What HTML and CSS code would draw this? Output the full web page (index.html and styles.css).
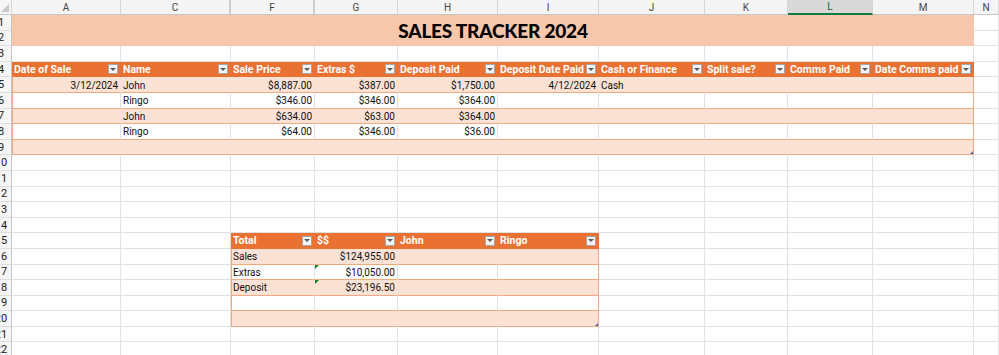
FILE: index.html
```html
<!DOCTYPE html>
<html>
<head>
<meta charset="utf-8">
<link rel="stylesheet" href="styles.css">
</head>
<body>
<div class="sheet">
  <div class="ch corner"></div>
  <div class="ch">A</div><div class="ch hid">C</div><div class="ch hid">F</div><div class="ch">G</div><div class="ch">H</div><div class="ch">I</div><div class="ch">J</div><div class="ch">K</div><div class="ch sel">L</div><div class="ch">M</div><div class="ch">N</div>

  <div class="rh">1</div><div class="title">SALES TRACKER 2024</div><div class="c"></div>
  <div class="rh">2</div><div class="c"></div>

  <div class="rh">3</div><div class="c"></div><div class="c"></div><div class="c"></div><div class="c"></div><div class="c"></div><div class="c"></div><div class="c"></div><div class="c"></div><div class="c"></div><div class="c"></div><div class="c"></div>

  <div class="rh">4</div>
  <div class="c th"><span class="tx">Date of Sale</span><i class="dd"></i></div>
  <div class="c th"><span class="tx">Name</span><i class="dd"></i></div>
  <div class="c th"><span class="tx">Sale Price</span><i class="dd"></i></div>
  <div class="c th"><span class="tx">Extras $</span><i class="dd"></i></div>
  <div class="c th"><span class="tx">Deposit Paid</span><i class="dd"></i></div>
  <div class="c th"><span class="tx">Deposit Date Paid</span><i class="dd"></i></div>
  <div class="c th"><span class="tx">Cash or Finance</span><i class="dd"></i></div>
  <div class="c th"><span class="tx">Split sale?</span><i class="dd"></i></div>
  <div class="c th"><span class="tx">Comms Paid</span><i class="dd"></i></div>
  <div class="c th"><span class="tx">Date Comms paid</span><i class="dd"></i></div>
  <div class="c"></div>

  <div class="rh">5</div>
  <div class="c tf tl r">3/12/2024</div><div class="c tf">John</div><div class="c tf r">$8,887.00</div><div class="c tf r">$387.00</div><div class="c tf r">$1,750.00</div><div class="c tf r">4/12/2024</div><div class="c tf">Cash</div><div class="c tf"></div><div class="c tf"></div><div class="c tf end"></div>
  <div class="c"></div>

  <div class="rh">6</div>
  <div class="c tw tl"></div><div class="c tw">Ringo</div><div class="c tw r">$346.00</div><div class="c tw r">$346.00</div><div class="c tw r">$364.00</div><div class="c tw"></div><div class="c tw"></div><div class="c tw"></div><div class="c tw"></div><div class="c tw end"></div>
  <div class="c"></div>

  <div class="rh">7</div>
  <div class="c tf tl"></div><div class="c tf">John</div><div class="c tf r">$634.00</div><div class="c tf r">$63.00</div><div class="c tf r">$364.00</div><div class="c tf"></div><div class="c tf"></div><div class="c tf"></div><div class="c tf"></div><div class="c tf end"></div>
  <div class="c"></div>

  <div class="rh">8</div>
  <div class="c tw tl"></div><div class="c tw">Ringo</div><div class="c tw r">$64.00</div><div class="c tw r">$346.00</div><div class="c tw r">$36.00</div><div class="c tw"></div><div class="c tw"></div><div class="c tw"></div><div class="c tw"></div><div class="c tw end"></div>
  <div class="c"></div>

  <div class="rh">9</div>
  <div class="c tf tl"></div><div class="c tf"></div><div class="c tf"></div><div class="c tf"></div><div class="c tf"></div><div class="c tf"></div><div class="c tf"></div><div class="c tf"></div><div class="c tf"></div><div class="c tf end rs"></div>
  <div class="c"></div>

  <div class="rh">10</div><div class="c"></div><div class="c"></div><div class="c"></div><div class="c"></div><div class="c"></div><div class="c"></div><div class="c"></div><div class="c"></div><div class="c"></div><div class="c"></div><div class="c"></div>
  <div class="rh">11</div><div class="c"></div><div class="c"></div><div class="c"></div><div class="c"></div><div class="c"></div><div class="c"></div><div class="c"></div><div class="c"></div><div class="c"></div><div class="c"></div><div class="c"></div>
  <div class="rh">12</div><div class="c"></div><div class="c"></div><div class="c"></div><div class="c"></div><div class="c"></div><div class="c"></div><div class="c"></div><div class="c"></div><div class="c"></div><div class="c"></div><div class="c"></div>
  <div class="rh">13</div><div class="c"></div><div class="c"></div><div class="c"></div><div class="c"></div><div class="c"></div><div class="c"></div><div class="c"></div><div class="c"></div><div class="c"></div><div class="c"></div><div class="c"></div>
  <div class="rh">14</div><div class="c"></div><div class="c"></div><div class="c"></div><div class="c"></div><div class="c"></div><div class="c"></div><div class="c"></div><div class="c"></div><div class="c"></div><div class="c"></div><div class="c"></div>

  <div class="rh">15</div><div class="c"></div><div class="c"></div>
  <div class="c th"><span class="tx">Total</span><i class="dd"></i></div>
  <div class="c th"><span class="tx">$$</span><i class="dd"></i></div>
  <div class="c th"><span class="tx">John</span><i class="dd"></i></div>
  <div class="c th"><span class="tx">Ringo</span><i class="dd"></i></div>
  <div class="c"></div><div class="c"></div><div class="c"></div><div class="c"></div><div class="c"></div>

  <div class="rh">16</div><div class="c"></div><div class="c"></div>
  <div class="c tf tl">Sales</div><div class="c tf r">$124,955.00</div><div class="c tf"></div><div class="c tf end"></div>
  <div class="c"></div><div class="c"></div><div class="c"></div><div class="c"></div><div class="c"></div>

  <div class="rh">17</div><div class="c"></div><div class="c"></div>
  <div class="c tw tl">Extras</div><div class="c tw r flag">$10,050.00</div><div class="c tw"></div><div class="c tw end"></div>
  <div class="c"></div><div class="c"></div><div class="c"></div><div class="c"></div><div class="c"></div>

  <div class="rh">18</div><div class="c"></div><div class="c"></div>
  <div class="c tf tl">Deposit</div><div class="c tf r flag">$23,196.50</div><div class="c tf"></div><div class="c tf end"></div>
  <div class="c"></div><div class="c"></div><div class="c"></div><div class="c"></div><div class="c"></div>

  <div class="rh">19</div><div class="c"></div><div class="c"></div>
  <div class="c tw tl"></div><div class="c tw"></div><div class="c tw"></div><div class="c tw end"></div>
  <div class="c"></div><div class="c"></div><div class="c"></div><div class="c"></div><div class="c"></div>

  <div class="rh">20</div><div class="c"></div><div class="c"></div>
  <div class="c tf tl"></div><div class="c tf"></div><div class="c tf"></div><div class="c tf end rs"></div>
  <div class="c"></div><div class="c"></div><div class="c"></div><div class="c"></div><div class="c"></div>

  <div class="rh">21</div><div class="c"></div><div class="c"></div><div class="c"></div><div class="c"></div><div class="c"></div><div class="c"></div><div class="c"></div><div class="c"></div><div class="c"></div><div class="c"></div><div class="c"></div>
  <div class="rh">22</div><div class="c"></div><div class="c"></div><div class="c"></div><div class="c"></div><div class="c"></div><div class="c"></div><div class="c"></div><div class="c"></div><div class="c"></div><div class="c"></div><div class="c"></div>
</div>
</body>
</html>
```

FILE: styles.css
```css
* { box-sizing: border-box; }
html, body { margin: 0; padding: 0; overflow: hidden; background: #fff; }
body {
  width: 999px;
  height: 355px;
  font-family: Roboto, "Liberation Sans", sans-serif;
  font-size: 10px;
  color: #111;
}
.sheet {
  display: grid;
  grid-template-columns: 21px 109px 110px 84px 83px 100px 101px 106px 83px 85px 101px 1fr;
  grid-template-rows: 15px;
  grid-auto-rows: 15.6px;
  margin-left: -9px;
  width: 1008px;
}
.ch {
  background: #f5f5f5;
  border-right: 1px solid #d6d6d6;
  border-bottom: 1px solid #c6c6c6;
  color: #444;
  display: flex;
  align-items: center;
  justify-content: center;
  font-size: 10px;
}
.ch.hid { border-right: 2px solid #cfcfcf; }
.ch.sel {
  background: #d9d9d9;
  border-bottom: 2px solid #107c41;
  color: #0c5f32;
}
.corner { position: relative; }
.corner::after {
  content: "";
  position: absolute;
  right: 2px;
  bottom: 2px;
  width: 0;
  height: 0;
  border-left: 8px solid transparent;
  border-bottom: 8px solid #c8c8c8;
}
.rh {
  background: #f5f5f5;
  border-right: 1px solid #c6c6c6;
  border-bottom: 1px solid #dedede;
  color: #222;
  display: flex;
  align-items: center;
  justify-content: center;
  font-size: 11px;
}
.title {
  grid-column: span 10;
  grid-row: span 2;
  background: #f7c7ac;
  display: flex;
  align-items: center;
  justify-content: center;
  font-family: Lato, sans-serif;
  font-weight: 900;
  font-size: 19px;
  color: #000;
  letter-spacing: -0.2px;
}
.c {
  border-right: 1px solid #e1e1e1;
  border-bottom: 1px solid #e1e1e1;
  padding: 1px 2px 0;
  display: flex;
  align-items: center;
  white-space: nowrap;
  overflow: hidden;
  position: relative;
}
.r { justify-content: flex-end; }
.th {
  background: #e97132;
  border-right-color: #e97132;
  border-bottom-color: #e97132;
  color: #fff;
  font-weight: 700;
  font-size: 10.5px;
  padding: 0 2px 0 2px;
}
.th .tx { flex: 1; min-width: 0; overflow: hidden; }
.dd {
  flex: none;
  width: 10px;
  height: 10px;
  background: #f4f4f4;
  border: 1px solid #a6a6a6;
  display: flex;
  align-items: center;
  justify-content: center;
}
.dd::after {
  content: "";
  width: 0;
  height: 0;
  border-left: 3px solid transparent;
  border-right: 3px solid transparent;
  border-top: 3px solid #5a5a5a;
}
.tf {
  background: #fbe2d5;
  border-right-color: #fbe2d5;
  border-bottom-color: #f1a983;
}
.tw {
  background: #fff;
  border-bottom-color: #f1a983;
}
.tl { box-shadow: inset 1px 0 #f1a983; }
.end { border-right-color: #f1a983; }
.rs::after {
  content: "";
  position: absolute;
  right: 0;
  bottom: 0;
  width: 0;
  height: 0;
  border-left: 3px solid transparent;
  border-bottom: 3px solid #3f5fb5;
}
.flag::before {
  content: "";
  position: absolute;
  left: 0;
  top: 0;
  width: 0;
  height: 0;
  border-top: 4px solid #1a7f1a;
  border-right: 4px solid transparent;
}
```
